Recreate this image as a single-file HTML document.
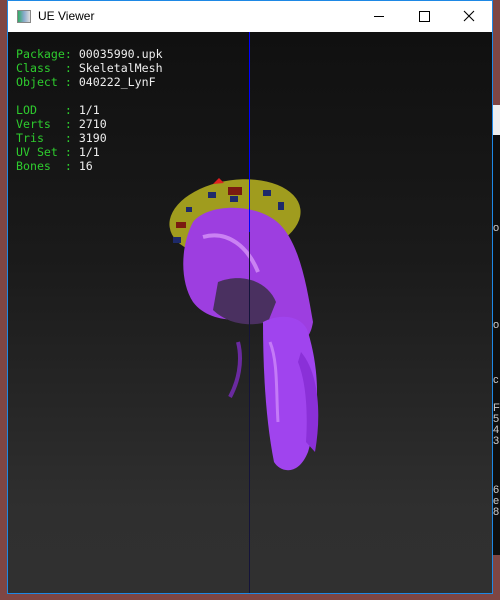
<!DOCTYPE html>
<html><head><style>
html,body{margin:0;padding:0;width:500px;height:600px;overflow:hidden;background:#7e4644;}
.win{position:absolute;left:7px;top:0;width:484px;height:592px;border:1px solid #1e88e5;background:#fff;}
.title{position:absolute;left:0;top:0;width:484px;height:30px;background:#fff;}
.title .t{position:absolute;left:30px;top:8px;font:12px "Liberation Sans",sans-serif;color:#000;}
.client{position:absolute;left:0;top:31px;width:484px;height:561px;background:linear-gradient(#101010,#1a1a1a 40%,#2f2f2f 85%,#303030);}
.txt{position:absolute;left:8px;top:15px;font:11.6px/14px "DejaVu Sans Mono","Liberation Mono",monospace;color:#eee;white-space:pre;}
.g{color:#2ecc2e;}
.strip{position:absolute;left:493px;top:0;width:7px;height:600px;background:#7e4644;}
</style></head><body>
<div class="strip">
 <div style="position:absolute;top:105px;height:30px;width:7px;background:#eee"></div>
 <div style="position:absolute;top:135px;height:420px;width:7px;background:#0e0e0e;color:#ccc;font:11px/11px 'Liberation Sans',sans-serif;overflow:hidden">
  <div style="position:absolute;top:88px">o</div><div style="position:absolute;top:185px">o</div><div style="position:absolute;top:240px">c</div>
  <div style="position:absolute;top:268px">F<br>5<br>4<br>3</div><div style="position:absolute;top:350px">6<br>e<br>8</div>
 </div>
</div>
<div class="win">
 <div class="title">
  <div style="position:absolute;left:9px;top:9px;width:12px;height:11px;border:1px solid #888;background:linear-gradient(90deg,#3a6 0,#8ac 50%,#ddd 100%)"></div>
  <div class="t">UE Viewer</div>
  <div style="position:absolute;left:366px;top:15px;width:10px;height:1px;background:#000"></div>
  <div style="position:absolute;left:411px;top:10px;width:9px;height:9px;border:1px solid #000"></div>
  <svg style="position:absolute;left:455px;top:9px" width="12" height="12"><path d="M1 1L11 11M11 1L1 11" stroke="#000" stroke-width="1.1"/></svg>
 </div>
 <div class="client">
  <svg width="484" height="561" style="position:absolute;left:0;top:0">
   <ellipse cx="227" cy="186" rx="66" ry="38" fill="#a09c1e" transform="rotate(-8 227 186)"/>
   <g fill="#1e2a6a"><rect x="200" y="160" width="8" height="6"/><rect x="222" y="164" width="8" height="6"/><rect x="178" y="175" width="6" height="5"/><rect x="255" y="158" width="8" height="6"/><rect x="270" y="170" width="6" height="8"/><rect x="165" y="205" width="8" height="6"/></g>
   <g fill="#7a1a10"><rect x="220" y="155" width="14" height="8"/><rect x="168" y="190" width="10" height="6"/></g>
   <path d="M205 152l6-6 5 5z" fill="#e02020"/>
   <path d="M185 190 C200 172 240 172 262 185 C290 200 298 250 305 290 C300 320 285 300 275 290 L250 285 C230 290 200 290 185 270 C172 250 172 215 185 190Z" fill="#9d3ee0"/>
   <path d="M210 250 C235 240 260 250 268 270 L260 290 C240 295 220 292 205 278Z" fill="#4a3060"/>
   <path d="M255 290 C275 280 295 285 300 300 C312 340 312 380 300 420 C290 445 272 440 266 430 C258 390 255 340 255 290Z" fill="#a044ee"/>
   <path d="M293 320 C310 340 314 380 307 420 L298 410 C300 380 298 350 290 330Z" fill="#8a30d8"/>
   <path d="M230 310 C235 330 230 350 222 365" stroke="#6a2aa0" stroke-width="4" fill="none"/>
   <path d="M195 205 C220 198 240 215 250 240" stroke="#e8b0ff" stroke-width="4" fill="none" opacity=".6"/>
   <path d="M262 310 C270 330 268 360 270 390" stroke="#e8b0ff" stroke-width="3" fill="none" opacity=".5"/>
  </svg>
  <div style="position:absolute;left:241px;top:0;width:1px;height:200px;background:#0000ff"></div>
  <div style="position:absolute;left:241px;top:200px;width:1px;height:361px;background:#14143a"></div>
  <div class="txt"><span class="g">Package:</span> 00035990.upk
<span class="g">Class  :</span> SkeletalMesh
<span class="g">Object :</span> 040222_LynF

<span class="g">LOD    :</span> 1/1
<span class="g">Verts  :</span> 2710
<span class="g">Tris   :</span> 3190
<span class="g">UV Set :</span> 1/1
<span class="g">Bones  :</span> 16</div>
 </div>
</div>
</body></html>
